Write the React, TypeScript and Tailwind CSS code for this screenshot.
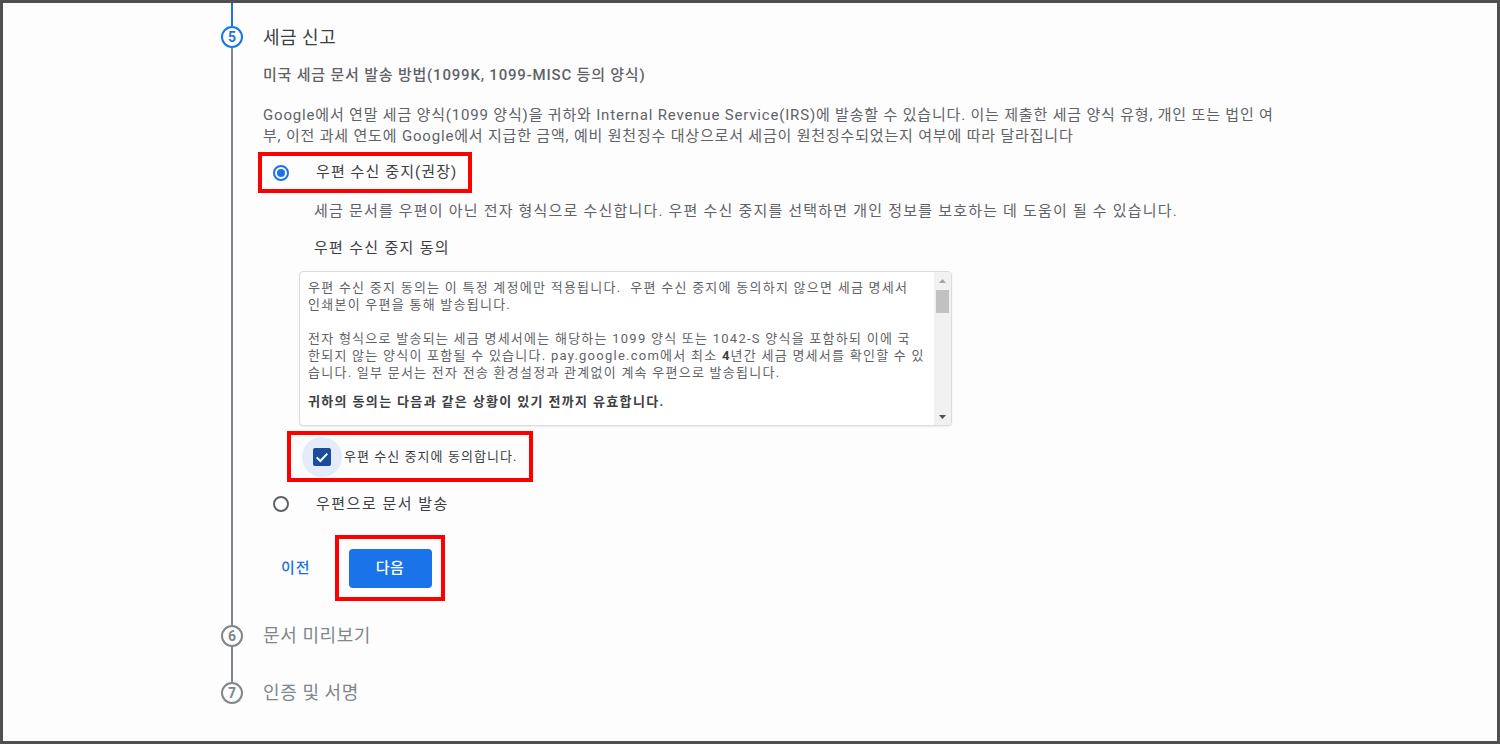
import React from "react";

const FONT = "Roboto, 'Noto Sans CJK KR', 'Noto Sans', sans-serif";

function StepCircle({ n, active }: { n: number; active?: boolean }) {
  return (
    <div
      className={
        active
          ? "w-[22px] h-[22px] rounded-full border-2 border-[#1a73e8] text-[#1a73e8] bg-white flex items-center justify-center text-[14px] font-bold leading-none shrink-0"
          : "w-[22px] h-[22px] rounded-full border-2 border-[#80868b] text-[#80868b] bg-white flex items-center justify-center text-[14px] font-bold leading-none shrink-0"
      }
    >
      {n}
    </div>
  );
}

function Radio({ checked }: { checked?: boolean }) {
  return checked ? (
    <div className="w-[16px] h-[16px] rounded-full border-2 border-[#1a73e8] flex items-center justify-center shrink-0">
      <div className="w-[8px] h-[8px] rounded-full bg-[#1a73e8]" />
    </div>
  ) : (
    <div className="w-[16px] h-[16px] rounded-full border-2 border-[#5f6368] shrink-0" />
  );
}

export default function App() {
  return (
    <div
      className="w-[1500px] h-[744px] border-[3px] border-[#505050] bg-[#fdfdfd] overflow-hidden"
      style={{ fontFamily: FONT }}
    >
      <div className="pl-[218px]">
        {/* Step 5 */}
        <div className="flex">
          <div className="w-[22px] flex flex-col items-center shrink-0">
            <div className="w-[2px] h-[23px] bg-[#1a73e8]" />
            <StepCircle n={5} active />
            <div className="w-[2px] flex-1 bg-[#80868b]" />
          </div>
          <div className="pl-[20px] pt-[24px] pb-[24px] flex-1 flex flex-col items-start">
            <div className="h-[22px] leading-[22px] text-[18px] text-[#3c4043] tracking-[0.5px]">세금 신고</div>
            <div className="mt-[16px] h-[20px] leading-[20px] text-[15px] text-[#5f6368] font-medium tracking-[0.8px]">
              미국 세금 문서 발송 방법(1099K, 1099-MISC 등의 양식)
            </div>
            <div className="mt-[20px] leading-[21px] text-[15px] text-[#5f6368] whitespace-nowrap tracking-[0.82px]">
              Google에서 연말 세금 양식(1099 양식)을 귀하와 Internal Revenue Service(IRS)에 발송할 수 있습니다. 이는 제출한 세금 양식 유형, 개인 또는 법인 여
              <br />
              부, 이전 과세 연도에 Google에서 지급한 금액, 예비 원천징수 대상으로서 세금이 원천징수되었는지 여부에 따라 달라집니다
            </div>

            {/* Red box 1 */}
            <div className="mt-[5px] -ml-[5px] w-[214px] h-[41px] border-4 border-[#ff0000] flex items-center">
              <div className="ml-[11px]">
                <Radio checked />
              </div>
              <div className="ml-[27px] text-[15px] text-[#3c4043] whitespace-nowrap tracking-[1.1px]">
                우편 수신 중지(권장)
              </div>
            </div>

            <div className="mt-[8px] ml-[51px] h-[20px] leading-[20px] text-[15px] text-[#5f6368] whitespace-nowrap tracking-[1.2px]">
              세금 문서를 우편이 아닌 전자 형식으로 수신합니다. 우편 수신 중지를 선택하면 개인 정보를 보호하는 데 도움이 될 수 있습니다.
            </div>
            <div className="mt-[17px] ml-[51px] h-[20px] leading-[20px] text-[15px] text-[#3c4043] whitespace-nowrap tracking-[1.3px]">
              우편 수신 중지 동의
            </div>

            {/* Consent text box */}
            <div className="mt-[13px] ml-[36px] w-[653px] h-[155px] border border-[#dadce0] rounded-[4px] shadow-[0_1px_2px_rgba(0,0,0,0.08)] bg-white flex overflow-hidden">
              <div className="flex-1 pl-[8px] pt-[7px] text-[13px] leading-[17px] text-[#5f6368] whitespace-nowrap tracking-[1.25px]">
                <p>
                  우편 수신 중지 동의는 이 특정 계정에만 적용됩니다.&nbsp; 우편 수신 중지에 동의하지 않으면 세금 명세서
                  <br />
                  인쇄본이 우편을 통해 발송됩니다.
                </p>
                <p className="mt-[17px]">
                  전자 형식으로 발송되는 세금 명세서에는 해당하는 1099 양식 또는 1042-S 양식을 포함하되 이에 국
                  <br />
                  한되지 않는 양식이 포함될 수 있습니다. pay.google.com에서 최소 <b className="text-[#3c4043]">4</b>년간 세금 명세서를 확인할 수 있
                  <br />
                  습니다. 일부 문서는 전자 전송 환경설정과 관계없이 계속 우편으로 발송됩니다.
                </p>
                <p className="mt-[12px] font-bold text-[#3c4043] tracking-[1.35px]">귀하의 동의는 다음과 같은 상황이 있기 전까지 유효합니다.</p>
              </div>
              {/* scrollbar */}
              <div className="w-[17px] bg-[#f1f1f1] flex flex-col items-center shrink-0">
                <div className="h-[17px] flex items-center justify-center">
                  <svg width="7" height="4" viewBox="0 0 7 4">
                    <path d="M0 4 L3.5 0 L7 4 Z" fill="#a3a3a3" />
                  </svg>
                </div>
                <div className="w-[13px] h-[23px] bg-[#c1c1c1] mt-[1px]" />
                <div className="flex-1" />
                <div className="h-[17px] flex items-center justify-center">
                  <svg width="7" height="4" viewBox="0 0 7 4">
                    <path d="M0 0 L7 0 L3.5 4 Z" fill="#505050" />
                  </svg>
                </div>
              </div>
            </div>

            {/* Red box 2 */}
            <div className="mt-[5px] ml-[24px] w-[246px] h-[51px] border-4 border-[#ff0000] flex items-center">
              <div className="ml-[11px] w-[40px] h-[40px] rounded-full bg-[#e3ecf8] flex items-center justify-center shrink-0">
                <div className="w-[18px] h-[18px] rounded-[2px] bg-[#1b4b9b] flex items-center justify-center">
                  <svg width="16" height="16" viewBox="0 0 24 24">
                    <path d="M4 12.5 L9.5 18 L20 7" stroke="#ffffff" strokeWidth="3" fill="none" />
                  </svg>
                </div>
              </div>
              <div className="ml-[2px] text-[13px] text-[#3c4043] whitespace-nowrap tracking-[1.05px]">
                우편 수신 중지에 동의합니다.
              </div>
            </div>

            {/* Radio 2 */}
            <div className="mt-[10px] ml-[10px] h-[24px] flex items-center">
              <Radio />
              <div className="ml-[27px] text-[15px] text-[#3c4043] whitespace-nowrap tracking-[1.5px]">
                우편으로 문서 발송
              </div>
            </div>

            {/* Buttons */}
            <div className="mt-[19px] ml-[18px] flex items-center">
              <div className="w-[30px] text-[15px] text-[#1a73e8] font-medium tracking-[1px] whitespace-nowrap">이전</div>
              <div className="ml-[24px] w-[110px] h-[66px] border-4 border-[#ff0000] flex items-center justify-center">
                <div className="w-[83px] h-[39px] rounded-[4px] bg-[#1a73e8] text-white text-[15px] font-medium tracking-[0.5px] flex items-center justify-center">
                  다음
                </div>
              </div>
            </div>
          </div>
        </div>

        {/* Step 6 */}
        <div className="flex">
          <div className="w-[22px] flex flex-col items-center shrink-0">
            <StepCircle n={6} />
            <div className="w-[2px] h-[35px] bg-[#80868b]" />
          </div>
          <div className="pl-[20px] h-[22px] leading-[22px] text-[18px] text-[#80868b] tracking-[0.6px]">문서 미리보기</div>
        </div>

        {/* Step 7 */}
        <div className="flex">
          <div className="w-[22px] flex flex-col items-center shrink-0">
            <StepCircle n={7} />
          </div>
          <div className="pl-[20px] h-[22px] leading-[22px] text-[18px] text-[#80868b] tracking-[0.6px]">인증 및 서명</div>
        </div>
      </div>
    </div>
  );
}
